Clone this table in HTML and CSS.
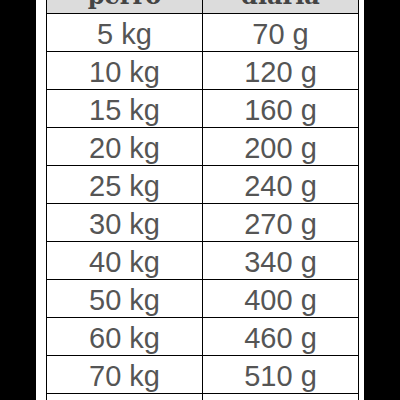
FILE: index.html
```html
<!DOCTYPE html>
<html lang="es">
<head>
<meta charset="utf-8">
<title>Ración diaria</title>
<link rel="stylesheet" href="styles.css">
</head>
<body>
<div class="panel">
  <table class="ration">
    <thead>
      <tr><th>Peso del<br>perro</th><th>Ración<br>diaria</th></tr>
    </thead>
    <tbody>
      <tr><td>5 kg</td><td>70 g</td></tr>
      <tr><td>10 kg</td><td>120 g</td></tr>
      <tr><td>15 kg</td><td>160 g</td></tr>
      <tr><td>20 kg</td><td>200 g</td></tr>
      <tr><td>25 kg</td><td>240 g</td></tr>
      <tr><td>30 kg</td><td>270 g</td></tr>
      <tr><td>40 kg</td><td>340 g</td></tr>
      <tr><td>50 kg</td><td>400 g</td></tr>
      <tr><td>60 kg</td><td>460 g</td></tr>
      <tr><td>70 kg</td><td>510 g</td></tr>
      <tr><td></td><td></td></tr>
    </tbody>
  </table>
</div>
</body>
</html>
```
FILE: styles.css
```css
html, body {
  margin: 0;
  padding: 0;
  background: #000;
  height: 400px;
  overflow: hidden;
}
.panel {
  width: 328px;
  min-height: 400px;
  margin: 0 auto;
  padding: 0 5px 0 10px;
  box-sizing: border-box;
  background: #fff;
}
.ration {
  width: 313px;
  margin-top: -47px;
  border-collapse: separate;
  border-spacing: 0;
  table-layout: fixed;
  border-left: 1px solid #000;
  border-top: 1px solid #000;
}
.ration th,
.ration td {
  border-right: 1px solid #000;
  border-bottom: 1px solid #000;
  text-align: center;
  padding: 0;
}
.ration th {
  background: #dcdcdc;
  color: #444;
  font-family: "DejaVu Serif", "Liberation Serif", serif;
  font-weight: bold;
  font-size: 24px;
  line-height: 28px;
  padding-bottom: 3px;
}
.ration td {
  height: 34px;
  padding-top: 3px;
  color: #555;
  font-family: "Liberation Sans", Arial, sans-serif;
  font-size: 29px;
  line-height: 34px;
  vertical-align: top;
}
```
